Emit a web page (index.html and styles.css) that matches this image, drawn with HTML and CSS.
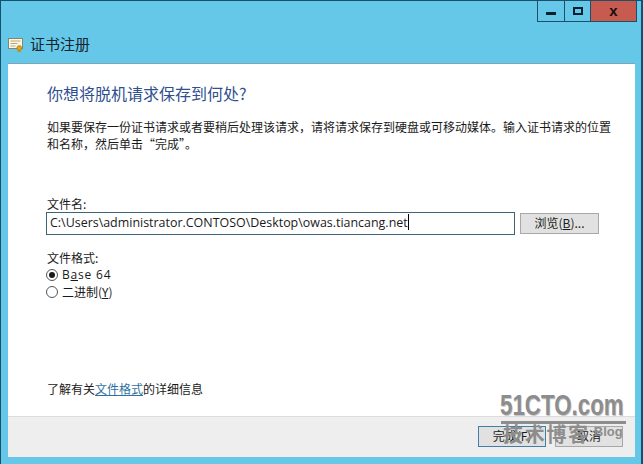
FILE: index.html
```html
<!DOCTYPE html>
<html lang="zh-CN">
<head>
	<meta charset="UTF-8">
	<title>证书注册</title>
	<link rel="stylesheet" href="styles.css">
</head>
<body>
	<div class="window">
		<div class="caption-buttons">
			<div class="cap-btn cap-min"><span class="min-bar"></span></div>
			<div class="cap-btn cap-max"><span class="max-box"></span></div>
			<div class="cap-btn cap-close">x</div>
		</div>
		<div class="title-row">
			<svg class="cert-icon" width="16" height="15" viewBox="0 0 16 15">
				<rect x="0.5" y="0.5" width="14" height="10" fill="#fbf7e6" stroke="#8a8468"/>
				<path d="M2.5 3h10M2.5 5.5h7M2.5 8h5" stroke="#b9a77a" fill="none"/>
				<path d="M10 11.5l-0.5 3 1.8-1 1.8 1-0.5-3" fill="#c48f1c"/>
				<circle cx="11.3" cy="10" r="2.5" fill="#d9a520" stroke="#a87a10" stroke-width="0.6"/>
			</svg>
			<span class="title-text">证书注册</span>
		</div>
		<div class="panel">
			<div class="content">
				<h1 class="heading">你想将脱机请求保存到何处?</h1>
				<p class="intro">如果要保存一份证书请求或者要稍后处理该请求，请将请求保存到硬盘或可移动媒体。输入证书请求的位置<br>和名称，然后单击“完成”。</p>
				<div class="field-label">文件名:</div>
				<div class="file-row">
					<div class="file-input">C:\Users\administrator.CONTOSO\Desktop\owas.tiancang.net<span class="caret"></span></div>
					<div class="browse-btn">浏览(<u>B</u>)...</div>
				</div>
				<div class="format-label">文件格式:</div>
				<div class="radio-row">
					<span class="radio radio-on"></span>
					<span class="base64">B<u>a</u>se 64</span>
				</div>
				<div class="radio-row">
					<span class="radio"></span>
					<span>二进制(<u>Y</u>)</span>
				</div>
				<div class="help-line">了解有关<a class="help-link">文件格式</a>的详细信息</div>
			</div>
			<div class="footer">
				<div class="btn btn-default">完成(F)</div>
				<div class="btn">取消</div>
			</div>
		</div>
		<div class="watermark">
			<div class="wm-logo">51CTO.com</div>
			<div class="wm-rule"></div>
			<div class="wm-sub"><span class="wm-cn">技术博客</span><span class="wm-blog">Blog</span></div>
		</div>
	</div>
</body>
</html>
```

FILE: styles.css
```css
html, body {
	margin: 0;
	padding: 0;
}
body {
	width: 643px;
	height: 464px;
	overflow: hidden;
	font-family: "Noto Sans CJK SC", "Liberation Sans", sans-serif;
	font-size: 12px;
	color: #1a1a1a;
}
.window {
	position: relative;
	box-sizing: border-box;
	width: 643px;
	height: 464px;
	background-color: #66c8e8;
	border: 1px solid #17506e;
	border-right-width: 2px;
	border-bottom: none;
	padding: 0 6px 7px 7px;
	display: flex;
	flex-direction: column;
}
.caption-buttons {
	position: absolute;
	top: -1px;
	right: 4px;
	display: flex;
	height: 22px;
}
.cap-btn {
	box-sizing: border-box;
	height: 22px;
	border: 1px solid #1f4f68;
	border-left: none;
	display: flex;
	align-items: center;
	justify-content: center;
}
.cap-min {
	width: 28px;
	border-left: 1px solid #1f4f68;
}
.cap-max {
	width: 26px;
}
.cap-close {
	width: 46px;
	background-color: #c75b50;
	font-family: "Liberation Sans", sans-serif;
	font-weight: bold;
	font-size: 15px;
	color: #1a0f10;
	line-height: 16px;
}
.min-bar {
	display: block;
	width: 10px;
	height: 3px;
	margin-top: 4px;
	background-color: #06202e;
}
.max-box {
	display: block;
	box-sizing: border-box;
	width: 10px;
	height: 8px;
	border: 2px solid #06202e;
}
.title-row {
	height: 62px;
	display: flex;
	align-items: flex-end;
	flex: none;
}
.cert-icon {
	margin-bottom: 10px;
	margin-right: 6px;
	flex: none;
}
.title-text {
	font-size: 15px;
	line-height: 20px;
	margin-bottom: 9px;
	color: #14242c;
}
.panel {
	flex: 1;
	display: flex;
	flex-direction: column;
	background-color: #ffffff;
	border-top: 1px solid #7fa6b6;
}
.content {
	flex: 1;
	position: relative;
	padding: 18px 0 0 39px;
}
.heading {
	margin: 0;
	font-size: 16px;
	font-weight: normal;
	line-height: 22px;
	color: #2f4f8f;
}
.intro {
	margin: 14px 0 0 0;
	line-height: 17px;
	white-space: nowrap;
}
.field-label {
	margin-top: 44px;
	line-height: 16px;
}
.file-row {
	display: flex;
	align-items: center;
	margin-left: -1px;
	gap: 5px;
}
.file-input {
	box-sizing: border-box;
	width: 469px;
	height: 23px;
	border: 1px solid #3f6478;
	padding-left: 3px;
	line-height: 20px;
	font-size: 12.45px;
	font-family: "Open Sans", "Liberation Sans", sans-serif;
	white-space: nowrap;
}
.caret {
	display: inline-block;
	width: 1px;
	height: 16px;
	background-color: #000;
	vertical-align: -3px;
}
.browse-btn {
	box-sizing: border-box;
	width: 79px;
	height: 21px;
	border: 1px solid #a8a8a8;
	background-color: #e1e1e1;
	text-align: center;
	line-height: 18px;
}
.format-label {
	margin-top: 15px;
	line-height: 16px;
}
.radio-row {
	display: flex;
	align-items: center;
	gap: 4px;
	height: 17px;
	margin-left: -1px;
}
.radio {
	box-sizing: border-box;
	position: relative;
	width: 12px;
	height: 12px;
	border: 1px solid #555;
	border-radius: 50%;
	background-color: #fff;
}
.radio-on::after {
	content: "";
	position: absolute;
	left: 2px;
	top: 2px;
	width: 6px;
	height: 6px;
	border-radius: 50%;
	background-color: #1a1a1a;
}
.base64 {
	font-family: "Open Sans", "Liberation Sans", sans-serif;
	letter-spacing: 0.8px;
}
.help-line {
	position: absolute;
	left: 39px;
	bottom: 18px;
	line-height: 18px;
}
.help-link {
	color: #2f6f9f;
	text-decoration: underline;
}
.footer {
	flex: none;
	height: 41px;
	box-sizing: border-box;
	background-color: #eeeeee;
	border-top: 1px solid #dcdcdc;
	display: flex;
	justify-content: flex-end;
	gap: 9px;
	padding: 9px 12px 0 0;
}
.btn {
	box-sizing: border-box;
	width: 68px;
	height: 21px;
	border: 1px solid #a8a8a8;
	background-color: #e1e1e1;
	text-align: center;
	line-height: 18px;
}
.btn-default {
	border: 1px solid #3f7fa8;
}
.watermark {
	position: absolute;
	left: 499px;
	top: 389px;
	width: 126px;
	pointer-events: none;
	color: #8d8d8d;
}
.wm-logo {
	font-family: "Liberation Sans", sans-serif;
	font-weight: bold;
	font-size: 29px;
	line-height: 30px;
	white-space: nowrap;
	text-shadow: 1px 1px 0 #c9c9c9;
	transform: scaleX(0.77);
	transform-origin: left center;
}
.wm-rule {
	height: 3px;
	margin: 1px 0 0 1px;
	background-color: #8d8d8d;
}
.wm-sub {
	display: flex;
	margin-top: -2px;
	white-space: nowrap;
}
.wm-cn {
	font-size: 20px;
	line-height: 24px;
	font-weight: bold;
	letter-spacing: 1.7px;
	margin-left: 3px;
}
.wm-blog {
	font-family: "Liberation Sans", sans-serif;
	font-weight: bold;
	font-size: 13px;
	line-height: 16px;
	margin: 2px 0 0 4px;
}
```
